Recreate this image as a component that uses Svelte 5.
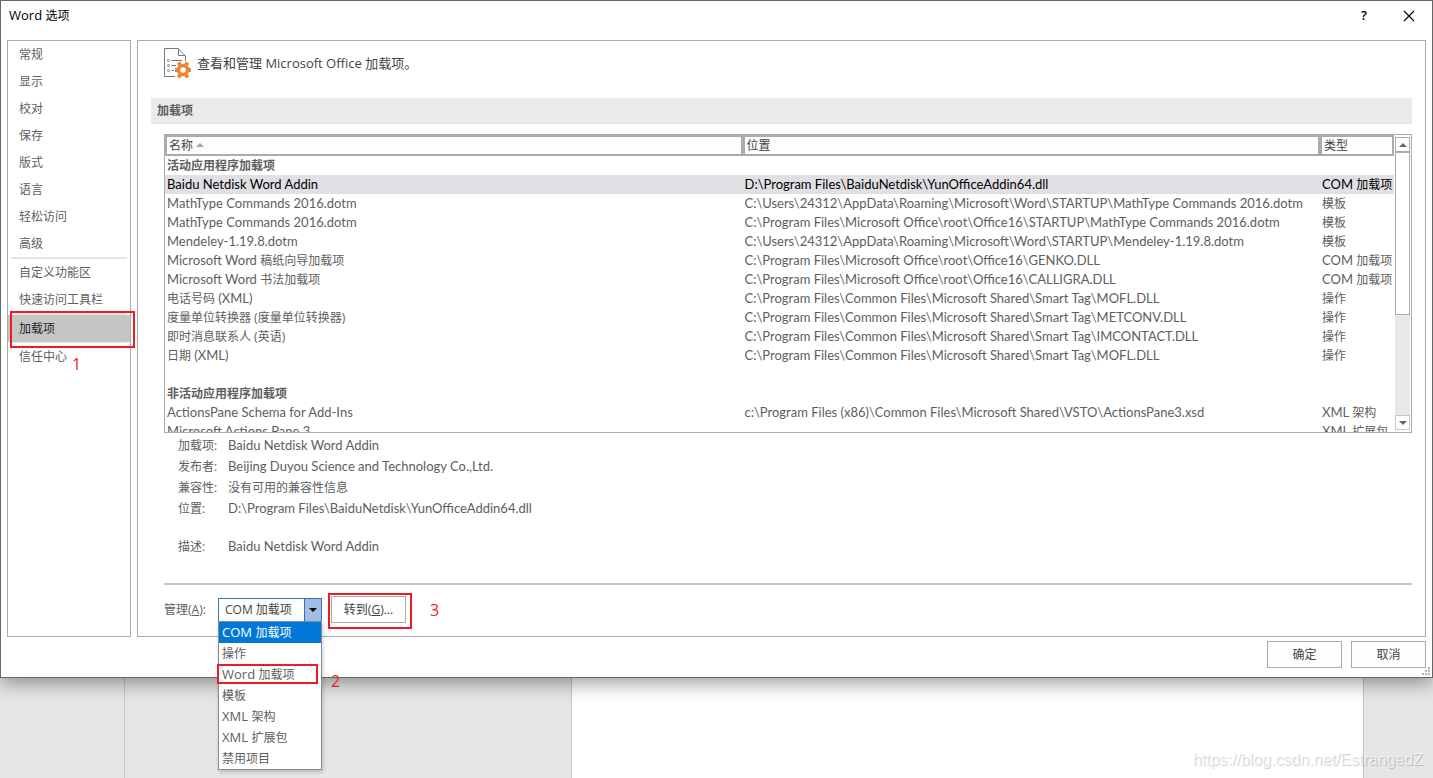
<script>
  const topNav = ['常规', '显示', '校对', '保存', '版式', '语言', '轻松访问', '高级'];
  const customNav = ['自定义功能区', '快速访问工具栏'];
  const kinds = ['COM 加载项', '操作', 'Word 加载项', '模板', 'XML 架构', 'XML 扩展包', '禁用项目'];

  const addins = [
    { group: '活动应用程序加载项' },
    { name: 'Baidu Netdisk Word Addin', path: 'D:\\Program Files\\BaiduNetdisk\\YunOfficeAddin64.dll', type: 'COM 加载项' },
    { name: 'MathType Commands 2016.dotm', path: 'C:\\Users\\24312\\AppData\\Roaming\\Microsoft\\Word\\STARTUP\\MathType Commands 2016.dotm', type: '模板' },
    { name: 'MathType Commands 2016.dotm', path: 'C:\\Program Files\\Microsoft Office\\root\\Office16\\STARTUP\\MathType Commands 2016.dotm', type: '模板' },
    { name: 'Mendeley-1.19.8.dotm', path: 'C:\\Users\\24312\\AppData\\Roaming\\Microsoft\\Word\\STARTUP\\Mendeley-1.19.8.dotm', type: '模板' },
    { name: 'Microsoft Word 稿纸向导加载项', path: 'C:\\Program Files\\Microsoft Office\\root\\Office16\\GENKO.DLL', type: 'COM 加载项' },
    { name: 'Microsoft Word 书法加载项', path: 'C:\\Program Files\\Microsoft Office\\root\\Office16\\CALLIGRA.DLL', type: 'COM 加载项' },
    { name: '电话号码 (XML)', path: 'C:\\Program Files\\Common Files\\Microsoft Shared\\Smart Tag\\MOFL.DLL', type: '操作' },
    { name: '度量单位转换器 (度量单位转换器)', path: 'C:\\Program Files\\Common Files\\Microsoft Shared\\Smart Tag\\METCONV.DLL', type: '操作' },
    { name: '即时消息联系人 (英语)', path: 'C:\\Program Files\\Common Files\\Microsoft Shared\\Smart Tag\\IMCONTACT.DLL', type: '操作' },
    { name: '日期 (XML)', path: 'C:\\Program Files\\Common Files\\Microsoft Shared\\Smart Tag\\MOFL.DLL', type: '操作' },
    { group: '' },
    { group: '非活动应用程序加载项' },
    { name: 'ActionsPane Schema for Add-Ins', path: 'c:\\Program Files (x86)\\Common Files\\Microsoft Shared\\VSTO\\ActionsPane3.xsd', type: 'XML 架构' },
    { name: 'Microsoft Actions Pane 3', path: '', type: 'XML 扩展包' }
  ];

  const details = [
    ['加载项:', 'Baidu Netdisk Word Addin'],
    ['发布者:', 'Beijing Duyou Science and Technology Co.,Ltd.'],
    ['兼容性:', '没有可用的兼容性信息'],
    ['位置:', 'D:\\Program Files\\BaiduNetdisk\\YunOfficeAddin64.dll'],
    ['描述:', 'Baidu Netdisk Word Addin']
  ];

  let selected = $state(1);
  let kind = $state('COM 加载项');

  // Latin runs are set one size larger than the Chinese around them.
  const runs = (text) => text.split(/([\x20-\x7e]*[A-Za-z][\x20-\x7e]*)/);
</script>

{#snippet mixed(text)}{#each runs(text) as run, i}{#if i % 2}<span class="latin">{run}</span>{:else}{run}{/if}{/each}{/snippet}

<div class="screen">
  <div class="backdrop">
    <div class="nav-pane"></div>
    <div class="gutter"></div>
    <div class="paper"></div>
    <div class="margin"></div>
  </div>

  <div class="dialog">
    <header class="titlebar">
      <span class="title">{@render mixed('Word 选项')}</span>
      <button class="tool help" aria-label="帮助">?</button>
      <button class="tool" aria-label="关闭">
        <svg width="12" height="12" viewBox="0 0 12 12"><path d="M1 1L11 11M11 1L1 11" stroke="#000" stroke-width="1.1" /></svg>
      </button>
    </header>

    <div class="content">
      <nav class="sidebar">
        {#each topNav as item}
          <button class="nav-item">{item}</button>
        {/each}
        <hr />
        {#each customNav as item}
          <button class="nav-item">{item}</button>
        {/each}
        <hr />
        <div class="anchor">
          <button class="nav-item current">加载项</button>
          <span class="mark mark-nav"></span>
          <span class="num num-1">1</span>
        </div>
        <hr class="thin" />
        <button class="nav-item">信任中心</button>
      </nav>

      <main class="pane">
        <div class="intro">
          <svg width="28" height="32" viewBox="0 0 28 32" fill="none">
            <path d="M11 29.5H.5V1.5H14L21.5 9V14M14.500 1.500V8.500H21" stroke="#777" />
            <g stroke="#777">
              <circle cx="4.500" cy="13.500" r="1" /><circle cx="4.500" cy="18.500" r="1" /><circle cx="4.500" cy="23.500" r="1" />
              <path d="M7.500 13.500H18M7.500 18.500H12M7.500 23.500H10" />
            </g>
            <circle cx="19" cy="23" r="4.500" stroke="#e8873a" stroke-width="3.500" />
            <path
              d="M19 23m-3-5l-1.500-2.500M22 18l1.500-2.500M16 28l-1.500 2.500M22 28l1.500 2.500M13.500 23H11M24.500 23H27"
              stroke="#e8873a"
              stroke-width="4"
            />
          </svg>
          <span>查看和管理 Microsoft Office 加载项。</span>
        </div>

        <h2>加载项</h2>

        <div class="body">
          <div class="list">
            <div class="rows">
              <table>
                <colgroup><col /><col /><col class="col-type" /></colgroup>
                <thead>
                  <tr>
                    <th>名称 <span class="sort"></span></th>
                    <th>位置</th>
                    <th>类型</th>
                  </tr>
                </thead>
                <tbody>
                  {#each addins as row, i}
                    {#if row.group !== undefined}
                      <tr><td class="group" colspan="3">{row.group}</td></tr>
                    {:else}
                      <tr class:selected={i === selected} onclick={() => (selected = i)}>
                        <td>{@render mixed(row.name)}</td>
                        <td>{@render mixed(row.path)}</td>
                        <td>{@render mixed(row.type)}</td>
                      </tr>
                    {/if}
                  {/each}
                </tbody>
              </table>
            </div>
            <div class="scrollbar">
              <button class="arrow" aria-label="向上滚动"><span class="up"></span></button>
              <div class="thumb"></div>
              <div class="track"></div>
              <button class="arrow down-btn" aria-label="向下滚动"><span class="down"></span></button>
            </div>
          </div>

          <dl class="details">
            {#each details as [label, value]}
              <dt>{label}</dt>
              <dd>{@render mixed(value)}</dd>
            {/each}
          </dl>

          <div class="manage">
            <label for="kind">管理(<u>A</u>):</label>
            <div class="combo">
              <select id="kind" bind:value={kind}>
                {#each kinds as k}
                  <option>{k}</option>
                {/each}
              </select>
              <span class="drop"><span class="caret"></span></span>
              <ul class="menu">
                {#each kinds as k, i}
                  <li>
                    <button class:active={k === kind} onclick={() => (kind = k)}>{@render mixed(k)}</button>
                    {#if i === 2}
                      <span class="mark mark-option"></span>
                      <span class="num num-2">2</span>
                    {/if}
                  </li>
                {/each}
              </ul>
            </div>
            <div class="anchor">
              <button class="push">转到(<u>G</u>)...</button>
              <span class="mark mark-go"></span>
              <span class="num num-3">3</span>
            </div>
          </div>
        </div>
      </main>
    </div>

    <footer>
      <button class="push">确定</button>
      <button class="push">取消</button>
      <svg class="grip" width="8" height="8" viewBox="0 0 8 8" fill="#b4b4b4">
        <path d="M6 0h2v2H6zM6 3h2v2H6zM6 6h2v2H6zM3 3h2v2H3zM3 6h2v2H3zM0 6h2v2H0z" />
      </svg>
    </footer>
  </div>

  <span class="watermark">https://blog.csdn.net/EstrangedZ</span>
</div>

<style>
  :global(body) {
    margin: 0;
  }
  .screen {
    position: relative;
    min-height: 100vh;
    overflow: hidden;
    font: 12px/19px 'Open Sans', 'Noto Sans CJK SC', sans-serif;
    color: #5e5e5e;
  }
  .screen * {
    box-sizing: border-box;
  }
  .latin {
    font-size: 13px;
    line-height: 1;
    white-space: pre;
  }
  td .latin,
  dd .latin {
    font-family: Lato, 'Open Sans', sans-serif;
  }
  button,
  select {
    font: inherit;
    color: inherit;
    margin: 0;
    padding: 0;
    border: 0;
    background: none;
  }

  /* Document window behind the dialog */
  .backdrop {
    position: absolute;
    inset: 0;
    display: flex;
    background: #e6e6e6;
  }
  .nav-pane {
    width: 125px;
    border-right: 1px solid #c6c6c6;
  }
  .gutter {
    width: 447px;
    border-right: 1px solid #c6c6c6;
  }
  .paper {
    flex: 1;
    background: #fff;
  }
  .margin {
    width: 70px;
    border-left: 1px solid #c6c6c6;
  }

  .dialog {
    position: relative;
    background: #fff;
    border: 1px solid #666;
    box-shadow: 0 5px 18px rgba(0, 0, 0, 0.4);
  }
  .titlebar {
    display: flex;
    align-items: center;
    height: 29px;
    padding: 0 8px;
    color: #000;
  }
  .title {
    flex: 1;
  }
  .tool {
    display: flex;
    align-items: center;
    justify-content: center;
    width: 30px;
    height: 29px;
  }
  .help {
    margin-right: 15px;
    font-size: 13px;
    font-weight: 600;
  }

  .content {
    display: flex;
    gap: 6px;
    padding: 10px 6px 0;
  }
  .sidebar {
    width: 124px;
    border: 1px solid #ababab;
  }
  .sidebar hr {
    height: 2px;
    margin: 0 3px;
    border: 0;
    background: #e5e5e5;
  }
  .sidebar .thin {
    height: 1px;
  }
  .nav-item {
    display: block;
    width: 100%;
    height: 27px;
    padding-left: 11px;
    text-align: left;
  }
  .nav-item.current {
    background: #c5c5c5;
    color: #262626;
  }
  .anchor {
    position: relative;
  }

  .pane {
    flex: 1;
    min-width: 0;
    padding: 5px 13px 0;
    border: 1px solid #ababab;
  }
  .intro {
    display: flex;
    align-items: center;
    gap: 5px;
    height: 34px;
    padding-left: 13px;
    font-size: 13px;
    color: #444;
  }
  h2 {
    margin: 18px 0 10px;
    padding: 0 6px;
    border-bottom: 1px solid #e1e1e1;
    background: #ebebeb;
    font-size: 12px;
    line-height: 25px;
    font-weight: 700;
  }
  .body {
    padding-left: 13px;
  }

  .list {
    display: flex;
    height: 299px;
    border: 1px solid #ababab;
    overflow: hidden;
  }
  .rows {
    flex: 1;
    overflow: hidden;
  }
  table {
    width: 100%;
    table-layout: fixed;
    border-collapse: separate;
    border-spacing: 0;
  }
  .col-type {
    width: 74px;
  }
  th {
    height: 21px;
    padding: 0 2px;
    border: 2px solid #ababab;
    background: #fdfdfd;
    color: #444;
    font-weight: 400;
    line-height: 17px;
    text-align: left;
  }
  .sort {
    display: inline-block;
    margin-bottom: 3px;
    border: 4px solid transparent;
    border-top: 0;
    border-bottom-color: #a8a499;
  }
  td {
    height: 19px;
    padding: 0 0 0 2px;
    white-space: nowrap;
  }
  .group {
    font-weight: 700;
  }
  .selected td {
    background: #e0dfe4;
    color: #000;
  }

  .scrollbar {
    display: flex;
    flex-direction: column;
    width: 17px;
    padding: 2px 1px 2px 1px;
  }
  .arrow {
    display: flex;
    align-items: center;
    justify-content: center;
    height: 15px;
    border: 1px solid #ababab;
  }
  .down-btn {
    border-color: #c6c6c6;
  }
  .up,
  .down,
  .caret {
    border: 4px solid transparent;
  }
  .up {
    border-top: 0;
    border-bottom-color: #666;
  }
  .down {
    border-bottom: 0;
    border-top-color: #666;
  }
  .thumb {
    height: 163px;
    border: 1px solid #ababab;
  }
  .track {
    flex: 1;
    background: #e8e8e8;
  }

  .details {
    display: grid;
    grid-template-columns: 50px 1fr;
    margin: 2px 0 26px;
    padding-left: 14px;
    line-height: 21px;
  }
  dd {
    margin: 0;
  }
  dt:last-of-type,
  dd:last-of-type {
    margin-top: 17px;
  }

  .manage {
    display: flex;
    align-items: center;
    padding: 11px 0 13px;
    border-top: 2px solid #c6c6c6;
  }
  .manage label {
    width: 54px;
  }
  .combo {
    position: relative;
    display: flex;
    width: 104px;
    height: 24px;
    margin-right: 9px;
    border: 1px solid #3e6db6;
  }
  .combo select {
    flex: 1;
    min-width: 0;
    padding-left: 6px;
    appearance: none;
    color: #444;
  }
  .drop {
    display: flex;
    align-items: center;
    justify-content: center;
    width: 17px;
    border-left: 1px solid #3e6db6;
    background: #a3bde3;
    pointer-events: none;
  }
  .caret {
    border-bottom: 0;
    border-top-color: #000;
  }
  .menu {
    position: absolute;
    z-index: 2;
    top: 22px;
    left: -1px;
    width: 104px;
    margin: 0;
    padding: 0;
    border: 1px solid #838a9c;
    background: #fff;
    box-shadow: 1px 2px 4px rgba(0, 0, 0, 0.2);
    list-style: none;
  }
  .menu li {
    position: relative;
  }
  .menu button {
    display: block;
    width: 100%;
    height: 21px;
    padding-left: 3px;
    text-align: left;
  }
  .menu .active {
    background: #0078d7;
    color: #fff;
  }
  .push {
    width: 75px;
    height: 27px;
    border: 1px solid #ababab;
    background: #fdfdfd;
    color: #444;
  }

  footer {
    position: relative;
    display: flex;
    justify-content: flex-end;
    gap: 9px;
    padding: 4px 6px 9px;
  }
  .grip {
    position: absolute;
    right: 2px;
    bottom: 2px;
  }

  /* Tutorial annotations */
  .mark {
    position: absolute;
    border: 2px solid #ed1c24;
    pointer-events: none;
  }
  .mark-nav {
    inset: -4px -5px -6px 2px;
  }
  .mark-option {
    inset: 0 3px 1px -2px;
  }
  .mark-go {
    inset: -3px -6px -6px -3px;
  }
  .num {
    position: absolute;
    color: #ed1c24;
    font-size: 16px;
    line-height: 20px;
  }
  .num-1 {
    top: 39px;
    left: 64px;
  }
  .num-2 {
    top: 7px;
    left: 112px;
  }
  .num-3 {
    top: 4px;
    left: 99px;
  }
  .watermark {
    position: absolute;
    right: 10px;
    bottom: 8px;
    color: rgba(255, 255, 255, 0.6);
    font: 16px/20px 'Liberation Sans', sans-serif;
    text-shadow: 1px 1px 1px rgba(0, 0, 0, 0.2);
  }
</style>
